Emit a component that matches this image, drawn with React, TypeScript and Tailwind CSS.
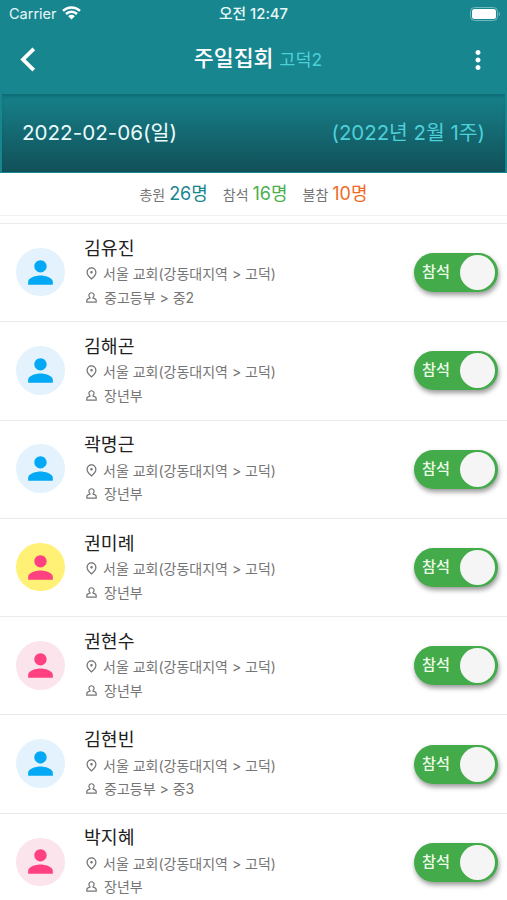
import { MdMoreVert, MdOutlinePlace, MdPerson } from "react-icons/md";

type Member = {
  name: string;
  group: string;
  icon: string;
  circle: string;
};

const blue = { icon: "text-[#03a9f4]", circle: "bg-[#e3f2fd]" };
const pink = { icon: "text-[#ff4081]", circle: "bg-[#fce4ec]" };
const yellow = { icon: "text-[#ff4081]", circle: "bg-[#fff176]" };

const members: Member[] = [
  { name: "김유진", group: "중고등부 > 중2", ...blue },
  { name: "김해곤", group: "장년부", ...blue },
  { name: "곽명근", group: "장년부", ...blue },
  { name: "권미례", group: "장년부", ...yellow },
  { name: "권현수", group: "장년부", ...pink },
  { name: "김현빈", group: "중고등부 > 중3", ...blue },
  { name: "박지혜", group: "장년부", ...pink },
];

function StatusBar() {
  return (
    <div className="grid h-[27px] grid-cols-3 items-center pl-[9px] pr-[6px] pt-px leading-none text-[#e8f8f9]">
      <div className="flex items-center gap-[5px]">
        <span className="text-[14.5px]">Carrier</span>
        <svg className="-mt-[2px]" width="19" height="14" viewBox="0 0 19 14" fill="none" stroke="white" strokeWidth="2.5">
          <path d="M1 4.9a12.2 12.2 0 0 1 17 0" />
          <path d="M4 8a7.9 7.9 0 0 1 11 0" />
          <path d="M9.5 13.6 6.2 10.2a4.7 4.7 0 0 1 6.6 0z" fill="white" stroke="none" />
        </svg>
      </div>
      <span className="-ml-[3px] text-center text-[14.8px] font-medium">오전 12:47</span>
      <svg className="-mt-px justify-self-end" width="31" height="14" viewBox="0 0 31 14" fill="none">
        <rect x="0.5" y="0.5" width="27" height="13" rx="4" stroke="#6fb8be" />
        <rect x="2" y="2" width="24" height="10" rx="2.5" fill="white" />
        <path d="M28.8 4.8c1.8.7 1.8 3.7 0 4.4z" fill="#6fb8be" />
      </svg>
    </div>
  );
}

function GroupIcon() {
  return (
    <svg className="ml-[2px] mr-[7px]" width="11" height="11" viewBox="0 0 11 11" fill="none" stroke="currentColor" strokeWidth="1.2">
      <path d="M3.9 5.4a2.6 2.6 0 1 1 3.2 0v.8c1.9.4 3.1 1.3 3.1 2.6v1.3H.8V8.8c0-1.3 1.2-2.2 3.1-2.6z" />
    </svg>
  );
}

function Toggle() {
  return (
    <button className="flex h-[39px] w-[84px] shrink-0 items-center justify-between rounded-full bg-[#43ab49] pl-[8px] pr-[3px] shadow-[1px_3px_5px_rgba(0,0,0,0.4)]">
      <span className="-mt-[2px] text-[15.2px] font-medium leading-none text-[#eefbe9]">참석</span>
      <span className="size-[35px] rounded-full bg-[#f5f5f5]" />
    </button>
  );
}

function MemberRow({ member }: { member: Member }) {
  return (
    <li className="flex h-[98.3px] items-center border-b border-[#ebebeb] pl-4 pr-[9px]">
      <div className={`-mt-px flex size-[48.5px] shrink-0 items-center justify-center rounded-full ${member.circle}`}>
        <MdPerson size={37} className={member.icon} />
      </div>
      <div className="ml-[19.5px] flex-1 whitespace-nowrap pb-[2px] text-[#757575]">
        <h2 className="h-[27px] text-[18.3px] leading-[27px] text-[#212121]">{member.name}</h2>
        <p className="flex h-[24px] items-center text-[14px]">
          <MdOutlinePlace size={15} className="mr-[4px]" />
          서울 교회(강동대지역 &gt; 고덕)
        </p>
        <p className="flex h-[23px] items-center text-[14px]">
          <GroupIcon />
          {member.group}
        </p>
      </div>
      <Toggle />
    </li>
  );
}

export default function App() {
  return (
    <div className="flex h-[900px] w-[507px] flex-col overflow-hidden bg-white font-['Inter','Noto_Sans_CJK_KR',sans-serif]">
      <header className="h-[94px] shrink-0 bg-[#18868f]">
        <StatusBar />
        <div className="grid h-[65px] grid-cols-[65px_1fr_56px] items-center">
          <svg className="ml-[20px]" width="17" height="25" viewBox="0 0 17 25" fill="none" stroke="white" strokeWidth="3.8">
            <path d="M13.8 1.8 3 12.5 13.8 23.2" />
          </svg>
          <h1 className="-mt-[2px] whitespace-nowrap text-center text-[21.7px] font-medium leading-none text-white">
            주일집회 <span className="text-[17.5px] font-normal text-[#4dd0d9]">고덕2</span>
          </h1>
          <MdMoreVert size={30} className="ml-[12px] text-white" />
        </div>
      </header>

      <div className="flex h-[79px] shrink-0 items-center justify-between border-x-2 border-b border-[#18868f] bg-linear-to-b from-[#16828b] to-[#115059] px-5 text-[20.6px] leading-none shadow-[inset_0_4px_4px_-2px_rgba(0,60,70,0.4)]">
        <span className="text-[#e9fbfc]">2022-02-06(일)</span>
        <span className="text-[20.4px] text-[#4dd0d9]">(2022년 2월 1주)</span>
      </div>

      <div className="flex h-[43px] shrink-0 items-center justify-center gap-[15px] border-b border-[#f1f3f3] text-[14px] leading-none text-[#757575]">
        <span>총원 <b className="text-[18px] font-normal text-[#18868f]">26명</b></span>
        <span>참석 <b className="text-[18px] font-normal text-[#4caf50]">16명</b></span>
        <span>불참 <b className="text-[18px] font-normal text-[#ef6a25]">10명</b></span>
      </div>

      <ul className="mt-[7px] border-t border-[#ebebeb]">
        {members.map((member) => (
          <MemberRow key={member.name} member={member} />
        ))}
      </ul>
    </div>
  );
}
